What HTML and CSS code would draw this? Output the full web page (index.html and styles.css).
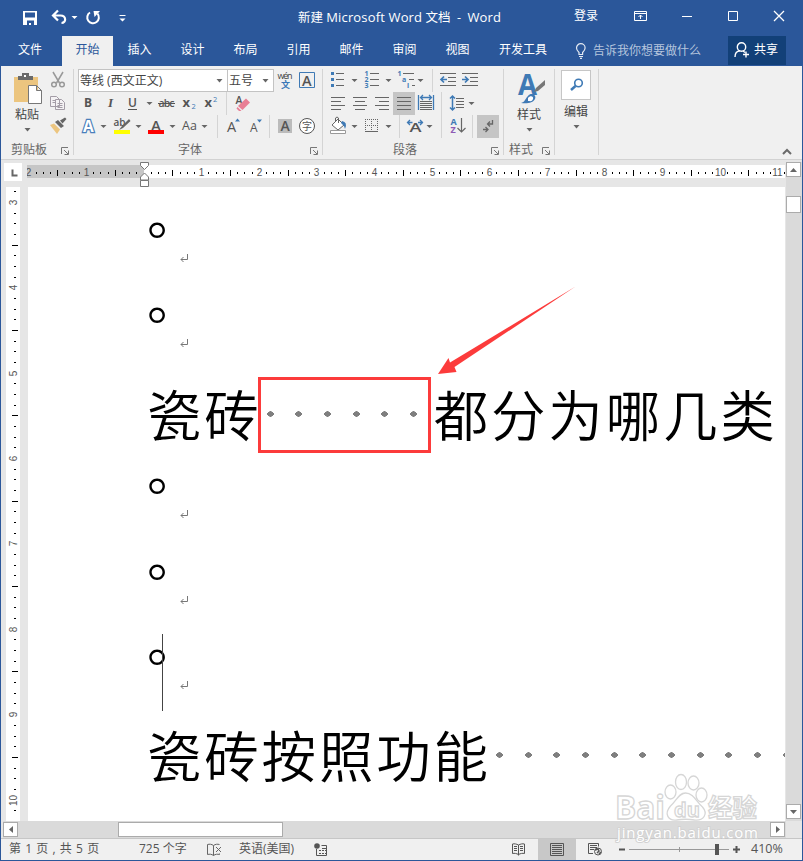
FILE: index.html
```
<!DOCTYPE html>
<html lang="zh-CN">
<head>
  <meta charset="UTF-8">
  <meta name="viewport" content="width=device-width, initial-scale=1.0">
  <title>新建 Microsoft Word 文档 - Word</title>
  <link rel="stylesheet" href="styles.css">
</head>
<body>
  <div class="window">
    <header class="titlebar">
      <svg class="quick" width="140" height="36" viewBox="0 0 140 36">
        <path d="M23 11h14v14H23z" fill="#fff"/>
        <path d="M25 12.500h10v5H25zM27 20.500h7V25h-3v-2h-2v2h-2z" fill="#2b579a"/>
        <path d="M53 15.500h7.500c6 0 6 7.500 1 7.500M58 10.500l-5 5 5 5" fill="none" stroke="#fff" stroke-width="2.200"/>
        <path d="M71.500 16h6l-3 3zM119.500 18.500h6l-3 3z" fill="#fff"/>
        <path d="M119.500 15.500h6" stroke="#fff"/>
        <path d="M90 12.500a5.800 5.800 0 1 0 7.500 1.200" fill="none" stroke="#fff" stroke-width="2"/>
        <path d="M93.500 11h6.500l-5.500 6z" fill="#fff"/>
      </svg>
      <div class="title">新建 <span>Microsoft Word</span> 文档&nbsp; -&nbsp; <span>Word</span></div>
      <div class="login">登录</div>
      <svg width="183" height="36" viewBox="620 0 183 36" fill="none" stroke="#fff">
        <path d="M634.500 11.500h12v9h-12zM634.500 13.500h12M640.500 19v-4M638.500 17l2-2 2 2M682 16.500h10M728.500 11.500h9v9h-9z"/>
        <path d="M774 11l10 10M784 11l-10 10" stroke-width="1.300"/>
      </svg>
    </header>

    <nav class="tabs">
      <a class="tab file">文件</a>
      <a class="tab active">开始</a>
      <a class="tab">插入</a>
      <a class="tab">设计</a>
      <a class="tab">布局</a>
      <a class="tab">引用</a>
      <a class="tab">邮件</a>
      <a class="tab">审阅</a>
      <a class="tab">视图</a>
      <a class="tab wide">开发工具</a>
      <div class="tell-me">
        <svg width="12" height="16" viewBox="0 0 12 16" fill="none" stroke="#e3e9f2" stroke-width="1.200">
          <path d="M4 11.500V9.500C2.500 8 1.500 7 1.500 5a4.300 4.300 0 0 1 8.600 0c0 2-1 3-2.500 4.500v2zM4 13.500h4M5 15.300h2"/>
        </svg>
        <span>告诉我你想要做什么</span>
      </div>
      <div class="share">
        <svg width="16" height="16" viewBox="0 0 16 16" fill="none" stroke="#fff" stroke-width="1.400">
          <circle cx="7.500" cy="5" r="4.200"/>
          <path d="M1 15c0-4 2-6 5-6.300M9 9l2 1.500M12 9.500v6M9 12.500h6"/>
        </svg>
        <span>共享</span>
      </div>
    </nav>

    <div class="ribbon">
      <section class="group clipboard">
        <div class="tools">
          <div class="big">
            <svg width="30" height="36" viewBox="14 70 30 36">
              <path d="M14 77h24v25H14z" fill="#ecc57f"/>
              <path d="M18 80v-4h4v-3h7v3h4v4z" fill="#6a6a6a"/>
              <path d="M24 75h2v2h-2z" fill="#fff"/>
              <path d="M28.500 85.500h8l5 5v13h-13zM36.500 85.500v5h5" fill="#fff" stroke="#777"/>
            </svg>
            <span>粘贴</span>
            <svg class="drop" width="7" height="4"><path d="M.5 0h6l-3 3.500z"/></svg>
          </div>
          <div class="side">
            <svg width="18" height="23" viewBox="49 69 18 23" fill="none" stroke="#999" stroke-width="1.500">
              <path d="M53 72l6.500 11M63 72l-6.500 11"/><circle cx="54" cy="84.500" r="2.300"/><circle cx="62" cy="84.500" r="2.300"/>
            </svg>
            <svg width="18" height="23" viewBox="49 92 18 23" fill="#f4f2f4" stroke="#a39ca6">
              <path d="M50.500 96.500h6l3 3v7h-9zM52.500 100.500h3M52.500 102.500h3M55.500 99.500h6l3 3v7h-9zM57.500 103.500h5M57.500 105.500h5M57.500 107.500h5"/>
            </svg>
            <svg width="18" height="23" viewBox="49 115 18 23">
              <path d="M50 125l4-1.500 6 6-3 4.500z" fill="#ecc57f"/><path d="M55 122l3-2 6 6-3 2zM60 120.500l5-3 1.500 1.500-4 4.500z" fill="#666"/>
            </svg>
          </div>
        </div>
        <div class="caption"><span>剪贴板</span><svg class="launcher" width="8" height="8"><path d="M.5 7V.5H7M3 3l4 4M7.500 3.500v4h-4"/></svg></div>
      </section>

      <section class="group font">
        <div class="tools rows">
          <div class="row">
            <div class="combo family"><span>等线 (西文正文)</span><svg class="drop" width="7" height="4"><path d="M.5 0h6l-3 3.500z"/></svg></div>
            <div class="combo size"><span>五号</span><svg class="drop" width="7" height="4"><path d="M.5 0h6l-3 3.500z"/></svg></div>
            <svg width="21" height="23" viewBox="274 69 21 23">
              <text x="277.500" y="79" font-size="9" fill="#444" textLength="15">wén</text>
              <text class="cjk" x="281" y="88" font-size="9" font-weight="700" fill="#3b78b8">文</text>
            </svg>
            <svg width="24" height="23" viewBox="295 69 24 23">
              <path d="M299.500 72.500h15v15h-15z" fill="none" stroke="#3f7ab5"/><text x="302" y="85.500" font-size="14.500" font-weight="600">A</text>
            </svg>
          </div>
          <div class="row">
            <svg width="76" height="23" viewBox="78 92 76 23">
              <text x="84" y="107" font-size="12" font-weight="700">B</text>
              <text class="serif" x="108" y="107" font-size="13" font-style="italic">I</text>
              <text x="128" y="107" font-size="12" font-weight="600">U</text><path d="M128 109.500h9" stroke="#555"/>
              <path class="arrow" d="M146.500 102h6l-3 3z"/>
            </svg>
            <svg width="72" height="23" viewBox="154 92 72 23">
              <text x="158.500" y="107" font-size="10.500" font-weight="600" textLength="16">abc</text><path d="M158 103.500h17" stroke="#555"/>
              <text x="182.500" y="107" font-size="13" font-weight="700">x</text><text x="191.500" y="109" font-size="7.500" class="blue">2</text>
              <text x="204.500" y="107" font-size="13" font-weight="700">x</text><text x="213" y="101.500" font-size="7.500" class="blue">2</text>
            </svg>
            <i class="sep"></i>
            <svg width="30" height="23" viewBox="227 92 30 23">
              <text x="235.500" y="104" font-size="10.500" font-weight="600">A</text>
              <path d="M238 106l8-7.500 4 4-7.500 7.500z" fill="#e87f95"/><path d="M237.500 107l4 4h-2.500l-2.500-2.500z" fill="#e87f95"/>
            </svg>
          </div>
          <div class="row">
            <svg width="31" height="23" viewBox="78 115 31 23">
              <text x="83" y="132" font-size="15.500" font-weight="700" fill="#fff" stroke="#4a7fbb" stroke-width="2.400" class="outline">A</text>
              <path class="arrow" d="M100.500 125h6l-3 3z"/>
            </svg>
            <svg width="35" height="23" viewBox="109 115 35 23">
              <text x="113.500" y="125.500" font-size="10" font-weight="600">ab</text><path d="M129 119l-7 7-3 4 4-2 7.500-7z" fill="#666"/>
              <path d="M114 130h16v4h-16z" fill="#ff0"/><path class="arrow" d="M135.500 125h6l-3 3z"/>
            </svg>
            <svg width="34" height="23" viewBox="144 115 34 23">
              <text x="151" y="131" font-size="15" font-weight="600">A</text><path d="M148 130h16v4h-16z" fill="red"/>
              <path class="arrow" d="M169.500 125h6l-3 3z"/>
            </svg>
            <svg width="39" height="23" viewBox="178 115 39 23">
              <text x="182" y="130" font-size="12.500">Aa</text><path class="arrow" d="M201.500 125h6l-3 3z"/>
            </svg>
            <i class="sep"></i>
            <svg width="51" height="23" viewBox="218 115 51 23">
              <text x="227" y="132" font-size="14.500">A</text><path d="M235 121.500l2.500-3 2.500 3z" fill="#3f7ab5"/>
              <text x="250" y="132" font-size="12">A</text><path d="M257 119.500l2.500 3 2.500-3z" fill="#3f7ab5"/>
            </svg>
            <i class="sep"></i>
            <svg width="50" height="23" viewBox="270 115 50 23">
              <path d="M278 119h14v14h-14z" fill="#bbb"/><text x="280.500" y="131" font-size="14" font-weight="600">A</text>
              <circle cx="307" cy="126" r="7.500" fill="#fff" stroke="#555"/><text class="cjk" x="302" y="130" font-size="10">字</text>
            </svg>
          </div>
        </div>
        <div class="caption"><span>字体</span><svg class="launcher" width="8" height="8"><path d="M.5 7V.5H7M3 3l4 4M7.500 3.500v4h-4"/></svg></div>
      </section>

      <section class="group paragraph">
        <div class="tools rows">
          <div class="row">
            <svg width="108" height="23" viewBox="324 69 108 23">
              <path d="M336 73.500h8M336 79.500h8M336 85.500h8M370 73.500h9M370 79.500h9M370 85.500h9M403 73.500h11M409 79.500h5M412 85.500h3" class="line"/>
              <path d="M331 72h3v3h-3zM331 78h3v3h-3zM331 84h3v3h-3z" fill="#3f7ab5"/>
              <g class="blue" font-size="7" font-weight="700"><text x="364.500" y="76">1</text><text x="364.500" y="82">2</text><text x="364.500" y="88">3</text><text x="397.500" y="76">1</text><text x="402" y="82">a</text><text x="407" y="88">i</text></g>
              <path class="arrow" d="M351.500 79h6l-3 3zM385.500 79h6l-3 3zM417.500 79h6l-3 3z"/>
            </svg>
            <i class="sep"></i>
            <svg width="56" height="23" viewBox="433 69 56 23">
              <path d="M440 73.500h16M448 77.500h8M448 81.500h8M440 85.500h16M462 73.500h16M470 77.500h8M470 81.500h8M462 85.500h16" class="line"/>
              <path d="M447 79.500h-6M444 76.500l-3 3 3 3M462 79.500h6M465 76.500l3 3-3 3" fill="none" stroke="#3f7ab5" stroke-width="1.700"/>
            </svg>
          </div>
          <div class="row">
            <svg width="69" height="23" viewBox="324 92 69 23"><path class="line" d="M331 98.500h14M331 102.500h10M331 106.500h14M331 110.500h10M353 98.500h14M355 102.500h10M353 106.500h14M355 110.500h10M375 98.500h14M379 102.500h10M375 106.500h14M379 110.500h10" transform="translate(0 -1)"/></svg>
            <svg class="pressed" width="22" height="23" viewBox="393 92 22 23"><path class="line" d="M397 98.500h14M397 102.500h14M397 106.500h14M397 110.500h14" transform="translate(0 -1)"/></svg>
            <svg width="26" height="23" viewBox="415 92 26 23">
              <path d="M418.500 95v15M433.500 95v15M421 97.500h10M423 95l-2.500 2.500 2.500 2.500M429 95l2.500 2.500-2.500 2.500" fill="none" stroke="#3f7ab5" stroke-width="1.300"/>
              <path class="line" d="M420 101.500h12M420 103.500h12M420 105.500h12M420 107.500h12M420 109.500h12"/>
            </svg>
            <i class="sep"></i>
            <svg width="40" height="23" viewBox="442 92 40 23">
              <path d="M452.500 96v14M450 98.500l2.500-2.500 2.500 2.500M450 107.500l2.500 2.500 2.500-2.500" fill="none" stroke="#3f7ab5" stroke-width="1.500"/>
              <path class="line" d="M456 98.500h8M456 101.500h8M456 104.500h8M456 107.500h8"/><path class="arrow" d="M468.500 102h6l-3 3z"/>
            </svg>
          </div>
          <div class="row">
            <svg width="75" height="23" viewBox="324 115 75 23">
              <path d="M332 125l6-6 6 6-6 5z" fill="#fff" stroke="#666"/><path d="M335.500 122v-4q1.500-2 3 0v5" fill="none" stroke="#666"/><path d="M342 121q6 1 3 8-1-4-4-6z" fill="#3f7ab5"/>
              <path d="M330.500 130.500h15v3h-15z" fill="#fff" stroke="#999"/>
              <path d="M365 119.500h13M365 125.500h13M365.500 119v12M371.500 119v12M377.500 119v12" stroke="#666" stroke-dasharray="1 1"/><path class="line" d="M365 131.500h13"/>
              <path class="arrow" d="M351.500 125h6l-3 3zM385.500 125h6l-3 3z"/>
            </svg>
            <i class="sep"></i>
            <svg width="41" height="23" viewBox="400 115 41 23">
              <text x="409.500" y="132" font-size="13" font-weight="600" textLength="12" lengthAdjust="spacingAndGlyphs">A</text>
              <path d="M407.500 122.500h5M410 120l-2.500 2.500 2.500 2.500M418 122.500h5M420 120l2.500 2.500-2.500 2.500" fill="none" stroke="#3f7ab5" stroke-width="1.300"/>
              <path class="arrow" d="M426.500 125h6l-3 3z"/>
            </svg>
            <i class="sep"></i>
            <svg width="30" height="23" viewBox="442 115 30 23">
              <text x="450.500" y="125" font-size="9" font-weight="700" class="blue">A</text><text x="450.500" y="133" font-size="9" font-weight="700" fill="#8e5bb5">Z</text>
              <path class="line" d="M461.500 118v14M457.500 128l4 4 4-4" stroke-width="1.200"/>
            </svg>
            <i class="sep"></i>
            <svg class="pressed return" width="22" height="23" viewBox="477 115 22 23"><path class="line" d="M492.500 120v4h-5M490 121.500l-2.500 2.500 2.500 2.500M483 129.500h5M485.500 127l2.500 2.500-2.500 2.500" stroke-width="1.300"/></svg>
          </div>
        </div>
        <div class="caption"><span>段落</span><svg class="launcher" width="8" height="8"><path d="M.5 7V.5H7M3 3l4 4M7.500 3.500v4h-4"/></svg></div>
      </section>

      <section class="group styles">
        <div class="tools">
          <div class="big">
            <svg width="30" height="36" viewBox="515 70 30 36">
              <text x="517" y="94.500" font-size="28" font-weight="700" class="blue" textLength="19" lengthAdjust="spacingAndGlyphs">A</text>
              <path d="M544 80l-9 8-2 4 4-1 7-6z" fill="#777"/><path d="M520 103c4-1 4-4 7-7 3-4 9-1 7 3-2 4-8 5-14 4z" fill="#3f7ab5"/><path d="M527 98c2-3 6-2 5 1s-3 2-5 2z" fill="#fff"/>
            </svg>
            <span>样式</span>
            <svg class="drop" width="7" height="4"><path d="M.5 0h6l-3 3.500z"/></svg>
          </div>
        </div>
        <div class="caption"><span>样式</span><svg class="launcher" width="8" height="8"><path d="M.5 7V.5H7M3 3l4 4M7.500 3.500v4h-4"/></svg></div>
      </section>

      <section class="group edit">
        <div class="big">
          <svg class="find" width="30" height="30" viewBox="561 70 30 30" fill="none" stroke="#3f7ab5">
            <circle cx="578.500" cy="83" r="3.800" stroke-width="1.600"/><path d="M575.500 86l-4.500 4" stroke-width="2.400"/>
          </svg>
          <span>编辑</span>
          <svg class="drop" width="7" height="4"><path d="M.5 0h6l-3 3.500z"/></svg>
        </div>
      </section>
      <svg class="collapse" width="10" height="7"><path d="M1 6l4-4 4 4" fill="none" stroke="#6a6a6a" stroke-width="2"/></svg>
    </div>

    <main class="workspace">
      <div class="corner"><svg width="18" height="18" viewBox="0 0 18 18"><path d="M8.500 6.500v6h5" fill="none" stroke="#666" stroke-width="2"/></svg></div>
      <div class="ruler-top"><svg id="hruler" width="758" height="27" viewBox="27 160 758 27"></svg></div>
      <div class="ruler-left"><svg id="vruler" width="14" height="634" viewBox="6 187 14 634"></svg></div>

      <article class="page">
        <p class="bullet"><span>。</span><svg class="mark" width="8" height="9"><path d="M7.500 0v5.500H1M3.500 3L1 5.500 3.500 8"/></svg></p>
        <p class="bullet"><span>。</span><svg class="mark" width="8" height="9"><path d="M7.500 0v5.500H1M3.500 3L1 5.500 3.500 8"/></svg></p>
        <p class="text">瓷砖<i></i><i></i><i></i><i></i><i></i><i></i>都分为哪几类</p>
        <p class="bullet"><span>。</span><svg class="mark" width="8" height="9"><path d="M7.500 0v5.500H1M3.500 3L1 5.500 3.500 8"/></svg></p>
        <p class="bullet"><span>。</span><svg class="mark" width="8" height="9"><path d="M7.500 0v5.500H1M3.500 3L1 5.500 3.500 8"/></svg></p>
        <p class="bullet"><span>。</span><svg class="mark" width="8" height="9"><path d="M7.500 0v5.500H1M3.500 3L1 5.500 3.500 8"/></svg></p>
        <p class="text">瓷砖按照功能<i></i><i></i><i></i><i></i><i></i><i></i><i></i><i></i><i></i><i></i><i></i></p>
        <div class="caret"></div>
        <div class="highlight"></div>
        <svg class="pointer" width="140" height="92" viewBox="437 285 140 92"><path d="M438 374l10.500-16 1.500 4.500L575.500 286.500 454.500 367l2 5z" fill="#fc3b3b"/></svg>
      </article>

      <div class="vscroll">
        <div class="sbtn"><svg width="7" height="4"><path d="M3.500 0l3.500 4H0z"/></svg></div>
        <div class="vthumb"></div>
        <div class="sbtn down"><svg width="7" height="4"><path d="M3.500 4L0 0h7z"/></svg></div>
      </div>
      <div class="hscroll">
        <div class="sbtn"><svg width="4" height="7"><path d="M4 0v7L0 3.500z"/></svg></div>
        <div class="hthumb"></div>
        <div class="sbtn right"><svg width="4" height="7"><path d="M0 0v7l4-3.500z"/></svg></div>
      </div>
    </main>

    <footer class="status">
      <span class="pages">第 1 页 , 共 5 页</span>
      <span class="words">725 个字</span>
      <svg class="proof" width="16" height="14" viewBox="206 841 16 14" fill="none" stroke="#666"><path d="M213.500 843.500c-2-1.500-4-1.500-6-1v10c2-.5 4-.5 6 1zc2-1.500 4-1.500 6-1M213.500 853.500c2-1.500 4-1.500 6-1v-1M216 845l5 5M221 845l-5 5"/></svg>
      <span class="lang">英语(美国)</span>
      <svg width="15" height="14" viewBox="314 842 15 14" fill="none" stroke="#555"><path d="M316.500 848v6.500h10v-10h-5M322 847.500h5M319 849.500h2M322 849.500h2M325 849.500h2M319 852.500h2M322 852.500h2M325 852.500h2"/><circle cx="317" cy="845" r="2.800" fill="#555" stroke="none"/></svg>
      <svg class="read" width="14" height="13" viewBox="512 842 14 13" fill="none" stroke="#555"><path d="M518.500 844v10.500M518.500 844c-2-1-4-1.500-6-1v9.500c2-.5 4 0 6 1 2-1 4-1.500 6-1V843c-2-.5-4 0-6 1zM514 845.500h3M514 847.500h3M514 849.500h3M520 845.500h3M520 847.500h3M520 849.500h3"/></svg>
      <div class="view-on"><svg width="14" height="13" viewBox="0 0 14 13"><path d="M.5.500h13v12H.5zM2 2.500h10M2 4.500h10M2 6.500h10M2 8.500h10M2 10.500h10" fill="none" stroke="#555"/></svg></div>
      <svg class="web" width="15" height="14" viewBox="588 842 15 14" fill="none" stroke="#555"><path d="M593 852.500h-4.500v-10h10v3M590 844.500h7M590 846.500h7M590 848.500h4"/><circle cx="598" cy="850.500" r="3.500" fill="#eee"/><path d="M595 849l3-1 1 2-2 2M599 853l2-2" stroke-width="1.500"/></svg>
      <svg class="zoom" width="122" height="14" viewBox="619 842 122 14"><path d="M629 848.500h100M679.500 846v5" stroke="#999"/><path d="M619 847.500h6v2h-6zM733 847.500h7v2h-7zM735.500 845h2v7h-2zM715 843h4v11h-4z" fill="#555"/></svg>
      <span class="percent">410%</span>
    </footer>

    <svg class="watermark" width="150" height="72" viewBox="612 772 150 72">
      <g fill="#fff" stroke="#d6d6d6" stroke-width="1.300">
        <ellipse cx="670.500" cy="792" rx="5.500" ry="7"/><ellipse cx="681" cy="782" rx="5.500" ry="7.500"/><ellipse cx="693.500" cy="783" rx="5.500" ry="7"/><ellipse cx="701.500" cy="795" rx="5.500" ry="7"/>
        <path d="M685.500 793c-7 0-9 8-15 13-7 8-2 15 6 14 6-1 12-1 18 0 9 1 14-6 8-13-6-5-9-14-17-14z"/>
        <text x="615" y="819" font-size="32" font-weight="700" textLength="50" lengthAdjust="spacingAndGlyphs">Bai</text>
        <text x="674" y="817" font-size="20" font-weight="700">du</text>
        <text class="cjk" x="708" y="817" font-size="24.500" font-weight="700" textLength="49">经验</text>
      </g>
      <text x="617" y="838" font-size="15" fill="#fff" stroke="#d2d2d2" stroke-width="2" class="outline" textLength="141">jingyan.baidu.com</text>
    </svg>
  </div>

  <script>
    // draw the ticks and numbers of both rulers, 8 steps per unit
    var h = document.getElementById('hruler');
    var out = '<path d="M27 165h117v13H27z" fill="#c6c6c6"/><path d="M144 165h641v13H144z" fill="#fff"/>';
    for (var i = -16; i <= 89; i++) {
      var x = Math.round(143.500 + i * 7.2);
      if (i === 0) continue;
      if (i % 8 === 0) {
        out += '<text class="num" x="' + (x + 0.5) + '" y="175.500">' + Math.abs(i / 8) + '</text>';
      } else if (i % 4 === 0) {
        out += '<path d="M' + x + ' 170h1v6h-1z"/>';
      } else {
        out += '<path d="M' + x + ' 172h1v2h-1z"/>';
      }
    }
    // indent markers
    out += '<path d="M140.500 162.500h8v3l-4 4-4-4zM140.500 180v-3l4-4 4 4v3zM140.500 180.500h8v6h-8z" fill="#fff" stroke="#777"/>';
    h.innerHTML = out;

    out = '';
    for (var j = 23; j <= 82; j++) {
      var y = Math.round(202 + (j - 24) * 10.67);
      if (j % 8 === 0) {
        out += '<text class="num" transform="translate(17 ' + (y + 0.5) + ') rotate(-90)">' + j / 8 + '</text>';
      } else if (j % 4 === 0) {
        out += '<path d="M12 ' + y + 'h6v1h-6z"/>';
      } else {
        out += '<path d="M14 ' + y + 'h2v1h-2z"/>';
      }
    }
    document.getElementById('vruler').innerHTML = out;
  </script>
</body>
</html>
```

FILE: styles.css
```
* {
  box-sizing: border-box;
}
body {
  margin: 0;
  font-family: "Open Sans", "Noto Sans CJK SC", sans-serif;
  font-size: 12px;
  line-height: 16px;
  color: #444;
  overflow: hidden;
}
svg {
  display: block;
  flex: none;
}
svg text:not([fill]) {
  fill: #555;
}
.watermark g text:not([fill]) {
  fill: #fff;
}
svg .outline {
  paint-order: stroke;
}
svg .cjk {
  font-family: "Noto Sans CJK SC", sans-serif;
}
svg .serif {
  font-family: "Liberation Serif", serif;
  font-weight: bold;
}
svg text.blue:not([fill]), svg .blue text:not([fill]) {
  fill: #3f7ab5;
}
.line {
  fill: none;
  stroke: #666;
}
.arrow, .drop {
  fill: #666;
}
.window {
  position: relative;
  display: flex;
  flex-direction: column;
  width: 803px;
  height: 861px;
  background: #2b579a;
}

/* title bar */
.titlebar {
  display: flex;
  height: 36px;
  color: #fff;
}
.title {
  width: 434px;
  padding: 9px 0 0 158px;
  white-space: nowrap;
  font-size: 12.5px;
}
.title span {
  font-size: 13px;
  letter-spacing: 0.15px;
}
.login {
  width: 46px;
  padding-top: 8px;
}
.tabs {
  display: flex;
  height: 30px;
  color: #fff;
}
.tab {
  width: 53px;
  padding-top: 6px;
  text-align: center;
}
.tab.file {
  width: 60px;
  margin-right: 2px;
}
.tab.active {
  width: 51px;
  background: #f0f0f0;
  color: #2b579a;
}
.tab.wide {
  width: 78px;
}
.tell-me {
  display: flex;
  gap: 6px;
  width: 153px;
  padding: 7px 0 0 13px;
  color: #b5c5dd;
  white-space: nowrap;
}
.share {
  display: flex;
  gap: 4px;
  width: 58px;
  height: 29px;
  margin-left: auto;
  margin-right: 17px;
  padding: 6px 0 0 6px;
  background: #124078;
  white-space: nowrap;
}

/* ribbon */
.ribbon {
  display: flex;
  height: 94px;
  margin: 0 1px;
  padding-top: 3px;
  background: #f0f0f0;
  border-bottom: 1px solid #d2d2d2;
}
.group {
  display: flex;
  flex-direction: column;
  height: 86px;
  border-right: 1px solid #d4d4d4;
}
.tools {
  display: flex;
  height: 72px;
}
.rows {
  flex-direction: column;
}
.row {
  display: flex;
  height: 23px;
}
.big {
  display: flex;
  flex-direction: column;
  align-items: center;
  padding-top: 1px;
}
.big span {
  margin-top: 1px;
}
.big .drop {
  margin-top: 5px;
}
.caption {
  display: flex;
  justify-content: space-between;
  color: #666;
}
.caption span {
  padding-top: 1px;
}
.launcher {
  margin: 7px 4px 0 0;
  fill: none;
  stroke: #777;
}
.tools + .caption span {
  height: 14px;
  line-height: 18px;
}
.sep {
  width: 1px;
  height: 23px;
  background: #d4d4d4;
}
.pressed {
  background: #c5c5c5;
}
.return {
  margin-left: 4px;
}
.clipboard {
  width: 73px;
}
.clipboard .tools {
  padding-left: 10px;
}
.clipboard .big {
  width: 32px;
}
.clipboard .big > svg:first-child {
  margin-left: 4px;
}
.side {
  margin-left: 6px;
}
.clipboard .caption {
  padding-left: 10px;
}
.font {
  width: 249px;
  padding-left: 4px;
}
.font .caption {
  padding-left: 100px;
}
.combo {
  display: flex;
  justify-content: space-between;
  align-items: center;
  height: 23px;
  padding: 0 4px 0 1px;
  background: #fff;
  border: 1px solid #c3c3c3;
}
.family {
  width: 150px;
}
.size {
  width: 47px;
  margin-left: -1px;
}
.paragraph {
  width: 181px;
  padding-left: 1px;
}
.paragraph .caption {
  padding-left: 69px;
}
.styles {
  width: 51px;
}
.styles .big {
  width: 51px;
}
.styles .big > svg:first-child {
  margin-left: 3px;
}
.styles .caption {
  padding-left: 5px;
}
.edit {
  width: 44px;
}
.edit .big {
  padding-right: 1px;
}
.edit .find {
  margin-bottom: 3px;
  background: #fff;
  outline: 1px solid #c6c6c6;
  outline-offset: -1px;
}
.collapse {
  margin: 79px 10px 0 auto;
}

/* document area */
.workspace {
  display: grid;
  grid-template-columns: 27px 758px 16px;
  grid-template-rows: 27px 634px 17px;
  height: 678px;
  margin: 0 1px;
  background: #e6e6e6;
}
.corner {
  margin: 3px 0 0 3px;
  width: 18px;
  height: 18px;
  background: #fff;
}
.ruler-top {
  margin-left: -1px;
}
.ruler-left {
  width: 14px;
  margin-left: 5px;
  background: #fff;
}
.num {
  font-family: "Liberation Sans", sans-serif;
  font-size: 10px;
  text-anchor: middle;
}
.page {
  position: relative;
  width: 757px;
  height: 634px;
  overflow: hidden;
  background: #fff;
  color: #000;
  font-family: "Noto Sans CJK SC", sans-serif;
  font-weight: 350;
}
.page p {
  display: flex;
  height: 85.4px;
  margin: 0;
  padding-left: 119px;
}
.bullet span {
  width: 33px;
  font-size: 52px;
  line-height: 52px;
}
.mark {
  margin-top: 67px;
  fill: none;
  stroke: #777;
}
.text {
  padding-top: 12px;
  font-size: 54.5px;
  line-height: 85px;
  letter-spacing: 2.8px;
  white-space: nowrap;
}
.text i {
  flex: none;
  width: 28.7px;
  height: 6px;
  margin-top: 41px;
  background: radial-gradient(ellipse 3.5px 2.8px at 8.5px 3px, #7f7f7f 90%, transparent);
}
.caret {
  position: absolute;
  left: 134px;
  top: 447px;
  width: 1px;
  height: 77px;
  background: #444;
}
.highlight {
  position: absolute;
  left: 230px;
  top: 190px;
  width: 173px;
  height: 76px;
  border: 3px solid #fc3b3b;
}
.pointer {
  position: absolute;
  left: 409px;
  top: 98px;
}
.vscroll {
  grid-column: 3;
  grid-row: 1 / 3;
  display: flex;
  flex-direction: column;
  margin-top: 2px;
  background: #dadada;
}
.sbtn {
  display: flex;
  align-items: center;
  justify-content: center;
  width: 15px;
  height: 15px;
  background: #fff;
  border: 1px solid #ababab;
  fill: #666;
}
.vthumb {
  width: 15px;
  height: 17px;
  margin-top: 19px;
  background: #fff;
  border: 1px solid #ababab;
}
.down {
  margin-top: auto;
  margin-bottom: 2px;
}
.hscroll {
  grid-column: 1 / 3;
  display: flex;
  margin-left: 2px;
  padding-top: 1px;
  background: #dadada;
}
.hthumb {
  width: 165px;
  height: 15px;
  margin-left: 100px;
  background: #fff;
  border: 1px solid #ababab;
}
.right {
  margin-left: auto;
  margin-right: 1px;
}

/* status bar */
.status {
  display: flex;
  align-items: center;
  height: 22px;
  margin: 0 1px;
  padding-left: 8px;
  background: #f0f0f0;
  border-top: 1px solid #c6c6c6;
  color: #555;
  white-space: nowrap;
}
.status span {
  padding-bottom: 1px;
}
.pages {
  width: 130px;
  word-spacing: 1.1px;
}
.words {
  width: 67px;
}
.lang {
  width: 75px;
  margin-left: 17px;
}
.read {
  margin-left: 183px;
}
.view-on {
  width: 38px;
  height: 21px;
  margin-left: 12px;
  padding: 4px 0 0 12px;
  background: #c8c8c8;
}
.web {
  margin-left: 12px;
}
.zoom {
  margin-left: 16px;
}
.percent {
  margin-left: 10px;
  font-size: 12.5px;
}
.watermark {
  position: absolute;
  left: 612px;
  top: 772px;
}
```
